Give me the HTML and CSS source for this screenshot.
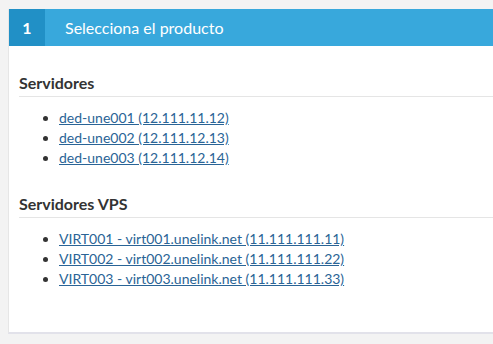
FILE: index.html
```html
<!DOCTYPE html>
<html lang="es">
<head>
    <meta charset="UTF-8">
    <meta name="viewport" content="width=device-width, initial-scale=1.0">
    <title>Selecciona el producto</title>
    <link rel="stylesheet" href="styles.css">
</head>
<body>
    <div class="step">
        <div class="step-head">
            <span class="step-num">1</span>
            <span class="step-title">Selecciona el producto</span>
        </div>
        <div class="step-body">
            <h3>Servidores</h3>
            <ul>
                <li><a href="#">ded-une001 (12.111.11.12)</a></li>
                <li><a href="#">ded-une002 (12.111.12.13)</a></li>
                <li><a href="#">ded-une003 (12.111.12.14)</a></li>
            </ul>
            <h3>Servidores VPS</h3>
            <ul>
                <li><a href="#">VIRT001 - virt001.unelink.net (11.111.111.11)</a></li>
                <li><a href="#">VIRT002 - virt002.unelink.net (11.111.111.22)</a></li>
                <li><a href="#">VIRT003 - virt003.unelink.net (11.111.111.33)</a></li>
            </ul>
        </div>
    </div>
</body>
</html>
```
FILE: styles.css
```css
*{
    padding: 0;
    margin: 0;
    box-sizing: border-box;
}
body{
    background-color: #f3f3f3;
    font-family: Lato, "Open Sans", sans-serif;
    color: #333;
    padding: 9px 0 0 8px;
}
/* tarjeta del paso */
.step{
    background-color: #fff;
    border-left: 1px solid #e6e6e6;
    border-bottom: 2px solid #e2e2ea;
    height: 325px;
}
.step-head{
    display: flex;
    align-items: center;
    height: 37px;
    background-color: #38a8dc;
    color: #fff;
    font-size: 16px;
}
.step-num{
    width: 36px;
    height: 100%;
    display: flex;
    align-items: center;
    justify-content: center;
    background-color: #2190c6;
    font-weight: bold;
}
.step-title{
    padding-left: 20px;
}
.step-body{
    padding: 27px 0 0 10px;
}
h3{
    font-size: 16px;
    font-weight: bold;
    color: #333;
    padding-bottom: 4px;
    border-bottom: 1px solid #e5e5e5;
    margin-bottom: 11px;
}
ul{
    padding-left: 40px;
    margin-bottom: 26px;
    font-size: 14px;
    line-height: 20px;
}
a{
    color: #2a6496;
}
```
